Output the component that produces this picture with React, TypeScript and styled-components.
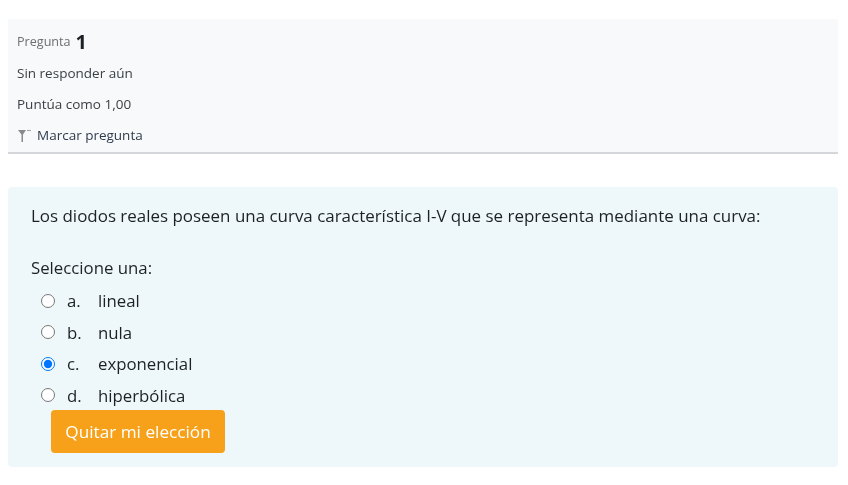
import React from 'react';
import styled, { createGlobalStyle } from 'styled-components';

const GlobalStyle = createGlobalStyle`
    html, body {
        margin: 0;
        background: #fff;
    }
    body {
        font-family: "Open Sans", "Liberation Sans", sans-serif;
        color: #1d2125;
    }
`;

const Page = styled.div`
    width: 848px;
    height: 485px;
    box-sizing: border-box;
    padding: 19px 10px 0 8px;
    overflow: hidden;
    filter: blur(0.6px);
`;

const InfoPanel = styled.div`
    height: 135px;
    box-sizing: border-box;
    padding: 7px 9px 0;
    background: #f8f9fa;
    border-bottom: 2px solid #d5d6da;
`;

const InfoRow = styled.div`
    height: 31.2px;
    display: flex;
    align-items: center;
    font-size: 13.5px;
    color: #3a4046;
`;

const QuestionLabel = styled.span`
    font-size: 12.6px;
    color: #6b6f73;
`;

const QuestionNumber = styled.span`
    margin-left: 5px;
    font-size: 20px;
    font-weight: 700;
    color: #1d2125;
`;

const FlagLink = styled.span`
    display: flex;
    align-items: center;
    gap: 5px;
    color: #2f3c4c;
`;

const ContentPanel = styled.div`
    margin-top: 33px;
    height: 280px;
    box-sizing: border-box;
    padding: 17px 23px 0;
    background: #eef8fb;
    border-radius: 4px;
    font-size: 16.8px;
`;

const QuestionText = styled.p`
    margin: 0;
    font-size: 16.94px;
    line-height: 24px;
    white-space: nowrap;
`;

const Prompt = styled.div`
    margin-top: 28px;
    line-height: 24px;
`;

const OptionList = styled.div`
    margin-top: 5px;
    padding-left: 10px;
`;

const Option = styled.label`
    height: 31.5px;
    display: flex;
    align-items: center;
`;

const Radio = styled.input`
    width: 14px;
    height: 14px;
    margin: 0 12px 0 0;
`;

const OptionLetter = styled.span`
    width: 31px;
`;

const ClearButton = styled.button`
    display: block;
    margin: -1px 0 0 20px;
    width: 174px;
    height: 43px;
    padding: 0;
    border: 0;
    border-radius: 4px;
    background: #f7a11a;
    color: #fff;
    font: inherit;
    font-size: 17.2px;
`;

const options = [
    { letter: 'a.', text: 'lineal' },
    { letter: 'b.', text: 'nula' },
    { letter: 'c.', text: 'exponencial', checked: true },
    { letter: 'd.', text: 'hiperbólica' },
];

const FlagIcon: React.FC = () => (
    <svg width="15" height="15" viewBox="0 0 15 15" fill="none">
        <path d="M1 2h8L6 6.5V14H4.5V6.5z" fill="#8a8a8a" />
        <path d="M10 2.5h4" stroke="#aaa" strokeWidth="1.2" />
    </svg>
);

const App: React.FC = () => (
    <Page>
        <GlobalStyle />
        <InfoPanel>
            <InfoRow>
                <QuestionLabel>Pregunta</QuestionLabel>
                <QuestionNumber>1</QuestionNumber>
            </InfoRow>
            <InfoRow>Sin responder aún</InfoRow>
            <InfoRow>Puntúa como 1,00</InfoRow>
            <InfoRow>
                <FlagLink>
                    <FlagIcon />
                    Marcar pregunta
                </FlagLink>
            </InfoRow>
        </InfoPanel>
        <ContentPanel>
            <QuestionText>
                Los diodos reales poseen una curva característica I-V que se representa mediante una curva:
            </QuestionText>
            <Prompt>Seleccione una:</Prompt>
            <OptionList>
                {options.map((option) => (
                    <Option key={option.letter}>
                        <Radio type="radio" name="answer" defaultChecked={option.checked} />
                        <OptionLetter>{option.letter}</OptionLetter>
                        {option.text}
                    </Option>
                ))}
            </OptionList>
            <ClearButton type="button">Quitar mi elección</ClearButton>
        </ContentPanel>
    </Page>
);

export default App;
